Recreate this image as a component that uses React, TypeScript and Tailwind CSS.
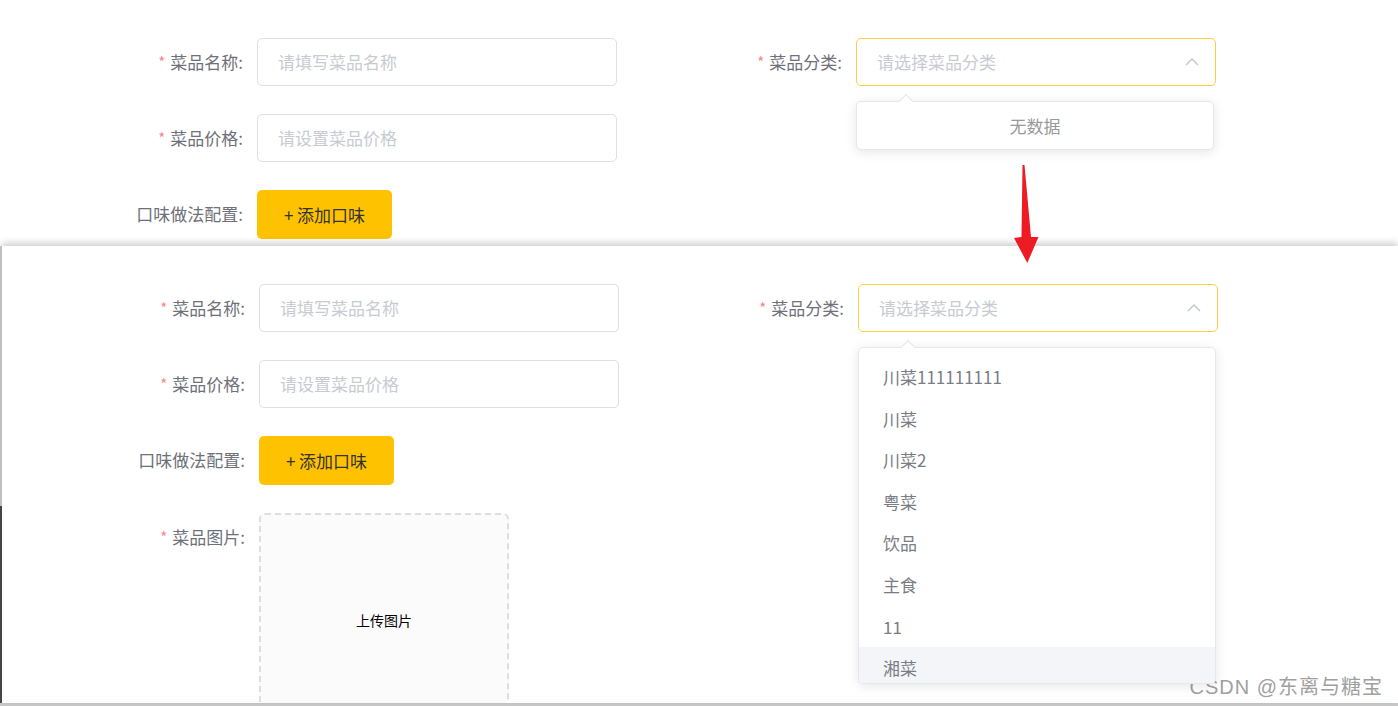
const font = { fontFamily: '"Noto Sans CJK SC", "Noto Sans", sans-serif' };

const categories = ["川菜111111111", "川菜", "川菜2", "粤菜", "饮品", "主食", "11", "湘菜"];

function Label({ text, required }: { text: string; required?: boolean }) {
  return (
    <div className="w-[140px] shrink-0 h-[48px] flex items-center justify-end pr-[14px] text-[17px] text-[#6e7179] whitespace-nowrap">
      {required && <span className="text-[#f78989] text-[15px] mr-[5px]">*</span>}
      {text}
    </div>
  );
}

function TextInput({ placeholder }: { placeholder: string }) {
  return (
    <div className="w-[360px] h-[48px] rounded-[5px] border border-[#dcdfe6] bg-white flex items-center px-[20px] text-[17px] text-[#c8cbd2]">
      {placeholder}
    </div>
  );
}

function Chevron() {
  return (
    <svg width="14" height="8" viewBox="0 0 14 8" fill="none">
      <polyline points="1,7 7,1 13,7" stroke="#c0c4cc" strokeWidth="1.4" />
    </svg>
  );
}

function Popper({ children, height }: { children: React.ReactNode; height: number }) {
  return (
    <div
      className="absolute left-0 top-[63px] w-[358px] rounded-[5px] border border-[#e4e7ed] bg-white shadow-[0_2px_12px_rgba(0,0,0,0.1)] z-10"
      style={{ height }}
    >
      <div className="absolute left-[44px] top-[-6px] w-[10px] h-[10px] rotate-45 bg-white border-l border-t border-[#e4e7ed]" />
      <div className="relative h-full overflow-hidden rounded-[5px]">{children}</div>
    </div>
  );
}

function CategorySelect({ open }: { open: "empty" | "list" }) {
  return (
    <div className="relative">
      <div className="w-[360px] h-[48px] rounded-[5px] border border-[#ffcd45] bg-white flex items-center justify-between pl-[20px] pr-[16px] text-[17px] text-[#c8cbd2]">
        <span>请选择菜品分类</span>
        <Chevron />
      </div>
      {open === "empty" ? (
        <Popper height={49}>
          <div className="h-full flex items-center justify-center text-[17px] text-[#999]">无数据</div>
        </Popper>
      ) : (
        <Popper height={337}>
          <div className="pt-[8px]">
            {categories.map((c) => (
              <div
                key={c}
                className={
                  "h-[41.6px] flex items-center px-[24px] text-[17px] text-[#7a7d85] " +
                  (c === "湘菜" ? "bg-[#f4f5f8]" : "")
                }
              >
                {c}
              </div>
            ))}
          </div>
        </Popper>
      )}
    </div>
  );
}

function DishForm({ open, withImage }: { open: "empty" | "list"; withImage?: boolean }) {
  return (
    <div className="pt-[38px] pl-[117px]">
      <div className="flex">
        <div>
          <div className="flex">
            <Label text="菜品名称:" required />
            <TextInput placeholder="请填写菜品名称" />
          </div>
          <div className="flex mt-[28px]">
            <Label text="菜品价格:" required />
            <TextInput placeholder="请设置菜品价格" />
          </div>
          <div className="flex mt-[28px]">
            <Label text="口味做法配置:" />
            <button className="w-[135px] h-[49px] rounded-[5px] bg-[#ffc200] text-[17px] text-[#333]">
              + 添加口味
            </button>
          </div>
          {withImage && (
            <div className="flex mt-[28px]">
              <Label text="菜品图片:" required />
              <div className="w-[250px] h-[214px] rounded-[6px] border-2 border-dashed border-[#dcdee3] bg-[#fbfbfc] flex items-center justify-center text-[14px] text-black">
                上传图片
              </div>
            </div>
          )}
        </div>
        <div className="flex ml-[99px]">
          <Label text="菜品分类:" required />
          <CategorySelect open={open} />
        </div>
      </div>
    </div>
  );
}

export default function App() {
  return (
    <div className="relative w-[1398px] h-[706px] overflow-hidden bg-[#c9c9c9]" style={font}>
      <div className="h-[246px] bg-white overflow-hidden">
        <DishForm open="empty" />
      </div>
      <div className="flex h-[457px]">
        <div className="w-[2px] flex flex-col">
          <div className="h-[260px] bg-[#cfcfcf]" />
          <div className="flex-1 bg-[#4a4a4f]" />
        </div>
        <div className="relative flex-1 bg-white overflow-hidden shadow-[0_-3px_7px_rgba(0,0,0,0.2)]">
          <DishForm open="list" withImage />
        </div>
      </div>

      <svg className="absolute left-[1010px] top-[160px]" width="34" height="106" viewBox="0 0 34 106">
        <polygon points="12.5,5 14.5,5 21,77 28.5,77 17.3,103 4,78 11.5,77" fill="#ed1c24" />
      </svg>

      <div
        className="absolute right-[15px] top-[673px] text-[20px] leading-[28px] tracking-[1px] text-[#a0a0a0] whitespace-nowrap"
        style={{ fontFamily: '"Liberation Sans", "Noto Sans CJK SC", sans-serif' }}
      >
        CSDN @东离与糖宝
      </div>
    </div>
  );
}
